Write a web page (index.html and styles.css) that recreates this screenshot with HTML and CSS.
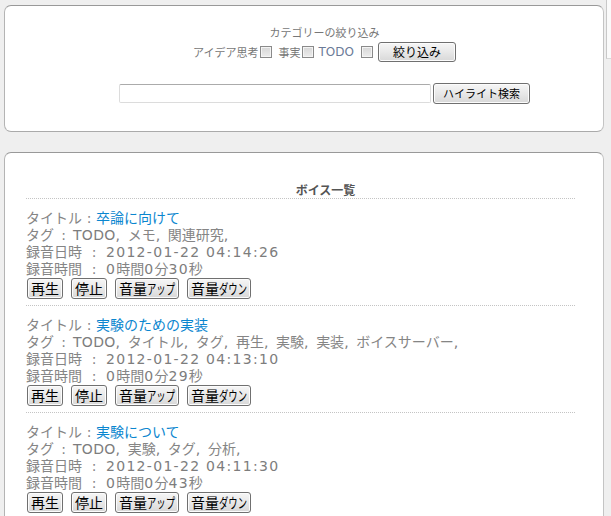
FILE: index.html
```html
<!DOCTYPE html>
<html lang="ja">
<head>
<meta charset="utf-8">
<title>ボイス一覧</title>
<link rel="stylesheet" href="styles.css">
</head>
<body>
<div class="scroll-edge"></div>
<section class="panel filter-panel">
  <div class="filter-inner">
    <div class="filter-title">カテゴリーの絞り込み</div>
    <div class="filter-row">
      <span class="lbl">アイデア思考</span><span class="cb cb-1"></span>
      <span class="lbl lbl-2">事実</span><span class="cb cb-2"></span>
      <span class="lbl latin">TODO</span><span class="cb cb-3"></span>
      <button class="btn btn-filter">絞り込み</button>
    </div>
    <div class="search-row">
      <input class="search-input" type="text">
      <button class="btn btn-search">ハイライト検索</button>
    </div>
  </div>
</section>

<section class="panel list-panel">
  <h2 class="list-heading">ボイス一覧</h2>

  <div class="item">
    <div class="line">タイトル<span class="sep sep-title">:</span><a class="title-link">卒論に向けて</a></div>
    <div class="line">タグ<span class="sep sep-tag">:</span><span class="latin">TODO</span><span class="latin cm">, </span>メモ<span class="latin cm">, </span>関連研究<span class="latin cm">,</span></div>
    <div class="line">録音日時<span class="sep sep-wide">:</span><span class="latin num">2012-01-22 04:14:26</span></div>
    <div class="line">録音時間<span class="sep sep-wide">:</span><span class="latin num">0</span>時間<span class="latin num">0</span>分<span class="latin num">30</span>秒</div>
    <div class="actions">
      <button class="btn btn-item">再生</button>
      <button class="btn btn-item">停止</button>
      <button class="btn btn-item">音量<span class="hw"><span>アップ</span></span></button>
      <button class="btn btn-item">音量<span class="hw"><span>ダウン</span></span></button>
    </div>
  </div>

  <div class="item">
    <div class="line">タイトル<span class="sep sep-title">:</span><a class="title-link">実験のための実装</a></div>
    <div class="line">タグ<span class="sep sep-tag">:</span><span class="latin">TODO</span><span class="latin cm">, </span>タイトル<span class="latin cm">, </span>タグ<span class="latin cm">, </span>再生<span class="latin cm">, </span>実験<span class="latin cm">, </span>実装<span class="latin cm">, </span>ボイスサーバー<span class="latin cm">,</span></div>
    <div class="line">録音日時<span class="sep sep-wide">:</span><span class="latin num">2012-01-22 04:13:10</span></div>
    <div class="line">録音時間<span class="sep sep-wide">:</span><span class="latin num">0</span>時間<span class="latin num">0</span>分<span class="latin num">29</span>秒</div>
    <div class="actions">
      <button class="btn btn-item">再生</button>
      <button class="btn btn-item">停止</button>
      <button class="btn btn-item">音量<span class="hw"><span>アップ</span></span></button>
      <button class="btn btn-item">音量<span class="hw"><span>ダウン</span></span></button>
    </div>
  </div>

  <div class="item">
    <div class="line">タイトル<span class="sep sep-title">:</span><a class="title-link">実験について</a></div>
    <div class="line">タグ<span class="sep sep-tag">:</span><span class="latin">TODO</span><span class="latin cm">, </span>実験<span class="latin cm">, </span>タグ<span class="latin cm">, </span>分析<span class="latin cm">,</span></div>
    <div class="line">録音日時<span class="sep sep-wide">:</span><span class="latin num">2012-01-22 04:11:30</span></div>
    <div class="line">録音時間<span class="sep sep-wide">:</span><span class="latin num">0</span>時間<span class="latin num">0</span>分<span class="latin num">43</span>秒</div>
    <div class="actions">
      <button class="btn btn-item">再生</button>
      <button class="btn btn-item">停止</button>
      <button class="btn btn-item">音量<span class="hw"><span>アップ</span></span></button>
      <button class="btn btn-item">音量<span class="hw"><span>ダウン</span></span></button>
    </div>
  </div>
</section>
</body>
</html>
```
FILE: styles.css
```css
html, body {
  margin: 0;
  padding: 0;
}
body {
  background: #efefef;
  font-family: "Noto Sans CJK JP", "DejaVu Sans", sans-serif;
  color: #808080;
  padding: 5px 0 0 4px;
  overflow: hidden;
  height: 516px;
  box-sizing: border-box;
}
.scroll-edge {
  position: absolute;
  top: 0;
  right: 0;
  width: 4px;
  height: 58px;
  background: #fafafa;
  border-left: 1px solid #c8c8c8;
  border-bottom: 1px solid #d8d8d8;
}
.panel {
  width: 600px;
  box-sizing: border-box;
  background: #fff;
  border: 1px solid #aaa;
  border-top-color: #999;
  border-left-color: #b4b4b4;
  border-right-color: #c4c4c4;
  border-radius: 7px;
}
.filter-panel {
  height: 127px;
  padding: 17px 0 0 0;
}
.filter-inner {
  padding-left: 41px;
  display: flex;
  flex-direction: column;
  align-items: center;
}
.filter-title {
  font-size: 11px;
  line-height: 18px;
  height: 18px;
  color: #777;
}
.filter-row {
  display: flex;
  align-items: center;
  height: 22px;
  font-size: 11px;
  color: #777;
}
.lbl-2 { margin-left: 6px; }
.filter-row .latin {
  margin-left: 4px;
  font-family: "DejaVu Sans", sans-serif;
  font-size: 12px;
  letter-spacing: 0;
  color: #6b7b98;
}
.cb {
  display: inline-block;
  width: 12px;
  height: 12px;
  box-sizing: border-box;
  border: 1px solid #8a8a8a;
  background: linear-gradient(#d6d6d6, #ececec);
  box-shadow: inset 0 0 0 1px #f4f4f4;
  margin-left: 2px;
}
.cb-3 { margin-left: 7px; }
.btn {
  font-family: "Noto Sans CJK JP", sans-serif;
  color: #000;
  background: linear-gradient(#f6f6f6 0%, #e8e8e8 50%, #d8d8d8 100%);
  border: 1px solid #707070;
  border-radius: 3px;
  box-shadow: inset 0 0 0 1px #fcfcfc;
  padding: 0;
  margin: 0;
  cursor: default;
}
.btn-filter {
  margin-left: 5px;
  width: 78px;
  height: 20px;
  font-size: 12px;
  line-height: 18px;
}
.search-row {
  display: flex;
  align-items: center;
  margin-top: 19px;
  height: 22px;
}
.search-input {
  width: 312px;
  height: 19px;
  box-sizing: border-box;
  border: 1px solid #dcdcdc;
  border-top-color: #ababab;
  border-radius: 2px;
  background: #fff;
  margin: 0 2px 0 0;
  padding: 0;
}
.btn-search {
  width: 97px;
  height: 21px;
  font-size: 11px;
  line-height: 19px;
}
.list-panel {
  margin-top: 20px;
  height: 400px;
  padding: 29px 28px 0 21px;
}
.list-heading {
  margin: 0;
  padding-left: 50px;
  text-align: center;
  font-size: 12px;
  line-height: 16px;
  font-weight: bold;
  color: #555;
  border-bottom: 1px dotted #c4c4c4;
}
.item {
  padding: 10px 0 6px 0;
  border-bottom: 1px dotted #c4c4c4;
}
.line {
  font-size: 14px;
  line-height: 17px;
  height: 17px;
  white-space: nowrap;
  color: #858585;
}
.latin {
  font-family: "DejaVu Sans", sans-serif;
  letter-spacing: 0.3px;
  color: #7d7d7d;
}
.latin.num {
  letter-spacing: 1.3px;
}
.latin.cm {
  letter-spacing: 1.6px;
}
.sep {
  display: inline-block;
  text-align: center;
  font-family: "DejaVu Sans", sans-serif;
}
.sep-title { width: 14px; }
.sep-tag { width: 19px; }
.sep-wide { width: 24px; }
.title-link {
  color: #0a86cf;
  text-decoration: none;
}
.actions {
  display: flex;
  align-items: center;
  gap: 8px;
  height: 22px;
  padding-left: 1px;
}
.btn-item {
  height: 21px;
  font-size: 14px;
  line-height: 19px;
  padding: 0 3px;
  white-space: nowrap;
}
.hw {
  display: inline-block;
  width: 28px;
  text-align: left;
  vertical-align: top;
}
.hw > span {
  display: inline-block;
  transform: scaleX(0.667);
  transform-origin: 0 50%;
}
```
